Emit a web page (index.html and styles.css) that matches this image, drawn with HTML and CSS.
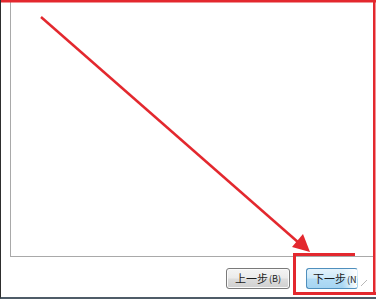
FILE: index.html
```html
<!DOCTYPE html>
<html lang="zh-CN">
<head>
<meta charset="utf-8">
<link rel="stylesheet" href="styles.css">
</head>
<body>
<div class="frame">
  <div class="panel"></div>
  <div class="footer">
    <button class="btn btn-back">上一步<span class="key">(B)</span></button>
    <button class="btn btn-next"><span class="clip">下一步<span class="key">(N)</span></span></button>
  </div>
  <svg class="grip" width="8" height="8" viewBox="0 0 8 8"><line x1="1" y1="7" x2="7" y2="1" stroke="#b8b8b8" stroke-width="1"/></svg>
  <svg class="marks" width="376" height="299" viewBox="0 0 376 299">
    <rect x="0" y="0" width="376" height="2.5" fill="#e3282e"/>
    <rect x="373" y="0" width="2.5" height="295" fill="#e3282e"/>
    <rect x="293" y="253" width="3" height="42" fill="#e3282e"/>
    <rect x="293" y="253" width="62" height="3" fill="#e3282e"/>
    <rect x="293" y="292" width="83" height="3" fill="#e3282e"/>
    <line x1="41" y1="17" x2="299" y2="243" stroke="#e3282e" stroke-width="2.5"/>
    <polygon points="310,252 292,247 303,234" fill="#e3282e"/>
  </svg>
</div>
</body>
</html>
```
FILE: styles.css
```css
html, body {
  margin: 0;
  padding: 0;
  background: #ffffff;
}
.frame {
  position: relative;
  width: 376px;
  height: 299px;
  box-sizing: border-box;
  border-left: 1px solid #2e2e2e;
  border-bottom: 2px solid #4f5c68;
  background: #ffffff;
  display: flex;
  flex-direction: column;
  padding: 0 2px 0 9px;
  overflow: hidden;
  font-family: "Noto Sans CJK SC", "Noto Sans", sans-serif;
}
.panel {
  height: 257px;
  box-sizing: border-box;
  border: 1px solid #a9a9a9;
  background: #ffffff;
  flex: none;
}
.footer {
  display: flex;
  justify-content: flex-end;
  align-items: flex-start;
  gap: 16px;
  padding: 11px 16px 0 0;
}
.btn {
  box-sizing: border-box;
  height: 21px;
  margin: 0;
  padding: 0;
  font-family: "Noto Sans CJK SC", "Noto Sans", sans-serif;
  font-size: 11px;
  line-height: 19px;
  color: #1a1a1a;
  border-radius: 3px;
  display: flex;
  align-items: center;
  justify-content: center;
  overflow: hidden;
  white-space: nowrap;
}
.btn-back {
  width: 64px;
  border: 1px solid #7a7a7a;
  background: linear-gradient(#f4f4f4 0%, #ebebeb 48%, #dddddd 52%, #cfcfcf 100%);
  box-shadow: inset 0 0 0 1px #fbfbfb;
}
.btn-next {
  width: 52px;
  justify-content: flex-start;
  padding-left: 6px;
  border: 1px solid #4f8fbd;
  border-right-color: transparent;
  background: linear-gradient(to right, rgba(255,255,255,0) 70%, #ffffff 100%),
              linear-gradient(#e4f3fc 0%, #cde9f9 48%, #b2dcf6 52%, #a6d5f2 100%);
}
.key {
  font-size: 9px;
  margin-left: 1px;
}
.clip {
  display: block;
}
.grip {
  position: absolute;
  right: 8px;
  bottom: 10px;
}
.marks {
  position: absolute;
  left: -1px;
  top: 0;
  pointer-events: none;
}
```
